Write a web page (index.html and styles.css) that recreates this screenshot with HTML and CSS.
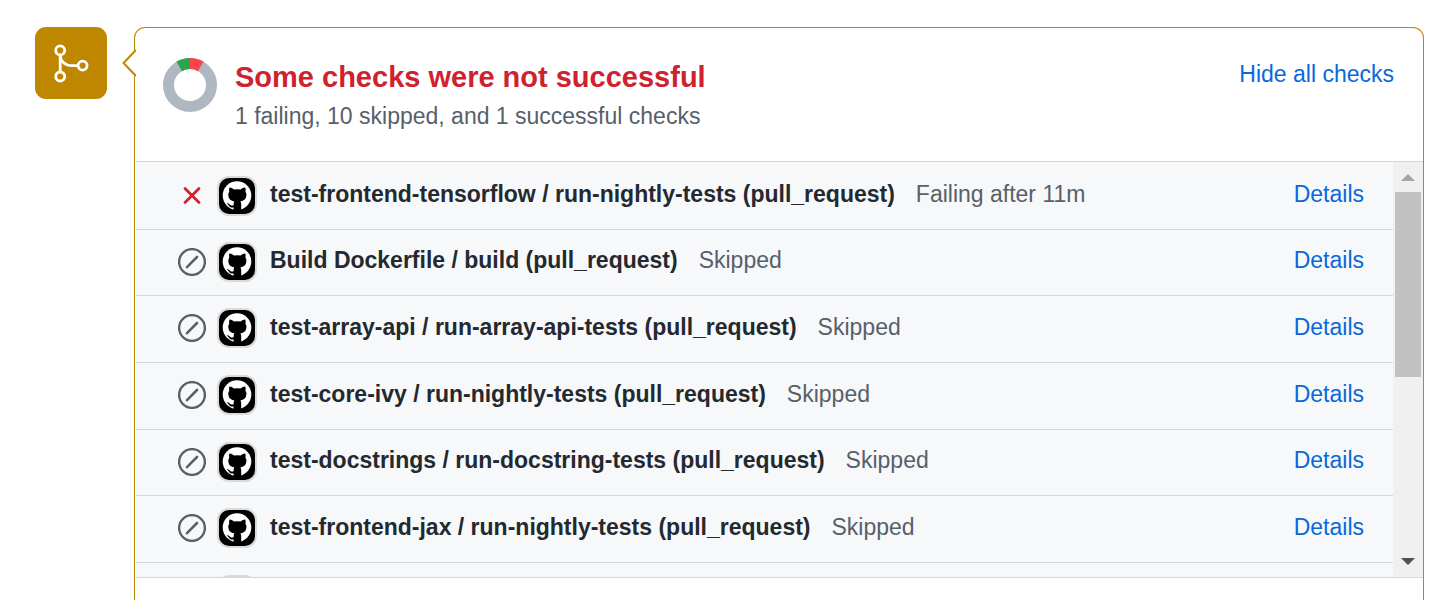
FILE: index.html
```html
<!DOCTYPE html>
<html lang="en">
<head>
<meta charset="utf-8">
<title>Pull request checks</title>
<link rel="stylesheet" href="styles.css">
</head>
<body>
<svg class="symbols" aria-hidden="true">
  <symbol id="skip" viewBox="0 0 28 28">
    <circle cx="14" cy="14" r="12.9" fill="none" stroke="#57606a" stroke-width="2.4"/>
    <path d="M9 19.2L19 9" fill="none" stroke="#57606a" stroke-width="2.6" stroke-linecap="round"/>
  </symbol>
  <symbol id="fail" viewBox="0 0 28 28">
    <path d="M7 6.500L21 20.500M21 6.500L7 20.500" fill="none" stroke="#cf222e" stroke-width="2.8" stroke-linecap="round"/>
  </symbol>
  <symbol id="octocat" viewBox="0 0 36 36">
    <circle cx="18" cy="17.600" r="14.300" fill="#fff"/>
    <path fill="#000" d="M10.400 9.600C12 9.500 13.600 10.400 15 11.500Q18.300 10.800 21.600 11.500C23 10.400 24.700 9.500 26.300 9.600Q26.900 11.600 26.400 13.600Q27.700 15.500 27.300 18C26.900 21.400 24.700 22.800 21.400 23.400Q22.200 24.600 22.200 26.200V36H14.600V29.500C11.800 29.900 10.600 28.900 9.600 27.200Q8.800 26 7.600 25.700Q8.800 24.800 10.300 25.900C11.600 27.300 12.600 27.900 14.600 27.300Q14.500 24.600 15.300 23.400C12 22.800 9.800 21.400 9.400 18Q9 15.500 10.300 13.600Q9.800 11.600 10.400 9.600Z"/>
  </symbol>
</svg>
<main class="timeline">
  <div class="badge">
    <svg class="badge-icon" viewBox="0 0 72 72" fill="none" stroke="#fff" stroke-width="2.8" aria-hidden="true">
      <circle cx="25.200" cy="23.400" r="4.500"/>
      <circle cx="25.200" cy="49.500" r="4.500"/>
      <circle cx="47.600" cy="38.600" r="4.500"/>
      <path d="M25.200 28V45M25.200 28C25.200 34 30 38.600 36.500 38.600H43"/>
    </svg>
  </div>
  <section class="card">
    <svg class="caret" viewBox="0 0 14 28" aria-hidden="true">
      <path d="M14 1L1.500 14L14 27" fill="#fff" stroke="#bf8700" stroke-width="2"/>
    </svg>
    <header class="summary">
      <svg class="donut" viewBox="0 0 54 54" fill="none" stroke-width="11" aria-hidden="true">
        <circle cx="27" cy="27" r="21.500" stroke="#afb8c1"/>
        <path d="M16.250 8.380A21.500 21.500 0 0 1 27 5.500" stroke="#2da44e"/>
        <path d="M27 5.500A21.500 21.500 0 0 1 37.750 8.380" stroke="#fa4549"/>
      </svg>
      <div class="summary-text">
        <h1 class="title">Some checks were not successful</h1>
        <p class="subtitle">1 failing, 10 skipped, and 1 successful checks</p>
      </div>
      <button class="toggle" type="button">Hide all checks</button>
    </header>
    <div class="checks">
      <ul class="list">
        <li class="row"><svg class="status"><use href="#fail"/></svg><span class="avatar"><svg class="mark"><use href="#octocat"/></svg></span><strong class="name">test-frontend-tensorflow / run-nightly-tests (pull_request)</strong><span class="state">Failing after 11m</span><a class="details" href="#">Details</a></li>
        <li class="row"><svg class="status"><use href="#skip"/></svg><span class="avatar"><svg class="mark"><use href="#octocat"/></svg></span><strong class="name">Build Dockerfile / build (pull_request)</strong><span class="state">Skipped</span><a class="details" href="#">Details</a></li>
        <li class="row"><svg class="status"><use href="#skip"/></svg><span class="avatar"><svg class="mark"><use href="#octocat"/></svg></span><strong class="name">test-array-api / run-array-api-tests (pull_request)</strong><span class="state">Skipped</span><a class="details" href="#">Details</a></li>
        <li class="row"><svg class="status"><use href="#skip"/></svg><span class="avatar"><svg class="mark"><use href="#octocat"/></svg></span><strong class="name">test-core-ivy / run-nightly-tests (pull_request)</strong><span class="state">Skipped</span><a class="details" href="#">Details</a></li>
        <li class="row"><svg class="status"><use href="#skip"/></svg><span class="avatar"><svg class="mark"><use href="#octocat"/></svg></span><strong class="name">test-docstrings / run-docstring-tests (pull_request)</strong><span class="state">Skipped</span><a class="details" href="#">Details</a></li>
        <li class="row"><svg class="status"><use href="#skip"/></svg><span class="avatar"><svg class="mark"><use href="#octocat"/></svg></span><strong class="name">test-frontend-jax / run-nightly-tests (pull_request)</strong><span class="state">Skipped</span><a class="details" href="#">Details</a></li>
        <li class="row"><span class="status"></span><span class="avatar"></span></li>
      </ul>
      <div class="scrollbar" aria-hidden="true">
        <svg class="arrow" viewBox="0 0 14 7"><path d="M0 7L7 0L14 7z" fill="#a3a3a3"/></svg>
        <div class="track"><div class="thumb"></div></div>
        <svg class="arrow" viewBox="0 0 14 7"><path d="M0 0L7 7L14 0z" fill="#505050"/></svg>
      </div>
    </div>
  </section>
</main>
</body>
</html>
```
FILE: styles.css
```css
* {
  box-sizing: border-box;
}

body {
  margin: 0;
  overflow: hidden;
  background: #fff;
  color: #24292f;
  font-family: "Liberation Sans", Arial, sans-serif;
  font-size: 23px;
  line-height: 36px;
}

.symbols {
  position: absolute;
  width: 0;
  height: 0;
}

.timeline {
  display: flex;
  gap: 27px;
  min-height: 100vh;
  padding: 27px 14px 0 35px;
}

.badge {
  flex: none;
  width: 72px;
  height: 72px;
  border-radius: 11px;
  background: #bf8700;
}

.badge-icon {
  display: block;
  width: 100%;
  height: 100%;
}

.card {
  position: relative;
  flex: 1;
  min-width: 0;
  padding-left: 1px;
  border: 1px solid #bf8700;
  border-bottom: 0;
  border-radius: 11px 11px 0 0;
}

.caret {
  position: absolute;
  top: 21px;
  left: -13px;
  width: 14px;
  height: 28px;
}

.summary {
  display: flex;
  align-items: flex-start;
  padding: 30px 29px 27px 27px;
}

.donut {
  flex: none;
  width: 54px;
  height: 54px;
  margin-right: 18px;
}

.summary-text {
  flex: 1;
}

.title {
  margin: 0 0 2px;
  color: #cf222e;
  font-size: 29px;
  line-height: 38px;
}

.subtitle {
  margin: 0;
  color: #57606a;
}

.toggle {
  padding: 0;
  border: 0;
  background: none;
  color: #0969da;
  font: inherit;
  line-height: 32px;
  cursor: pointer;
}

.checks {
  display: flex;
  height: 417px;
  overflow: hidden;
  border: solid #d0d7de;
  border-width: 1px 0;
}

.list {
  flex: 1;
  min-width: 0;
  margin: 0;
  padding: 0;
  list-style: none;
}

.row {
  display: flex;
  align-items: center;
  height: 67px;
  padding: 0 29px 2px 42px;
  border-bottom: 1px solid #d0d7de;
  background: #f6f8fa;
}

.row:first-child {
  height: 68px;
  padding-bottom: 0;
}

.row:nth-child(3n+2) {
  height: 66px;
}

.status {
  flex: none;
  width: 28px;
  height: 28px;
  margin-right: 13px;
}

.avatar {
  flex: none;
  width: 36px;
  height: 36px;
  margin-right: 15px;
  overflow: hidden;
  border-radius: 10px;
  background: #000;
  box-shadow: 0 0 0 2px #d8dadc;
}

.mark {
  display: block;
  width: 100%;
  height: 100%;
}

.name,
.state,
.details {
  padding-bottom: 3px;
  white-space: nowrap;
}

.state {
  margin-left: 21px;
  color: #57606a;
}

.details {
  margin-left: auto;
  color: #0969da;
  text-decoration: none;
}

.scrollbar {
  display: flex;
  flex: none;
  flex-direction: column;
  align-items: center;
  width: 30px;
  padding: 12px 2px;
  background: #f0f0f0;
}

.arrow {
  width: 14px;
  height: 7px;
}

.track {
  flex: 1;
  width: 100%;
  padding: 11px 0;
}

.thumb {
  height: 52%;
  background: #c1c1c1;
}
```
